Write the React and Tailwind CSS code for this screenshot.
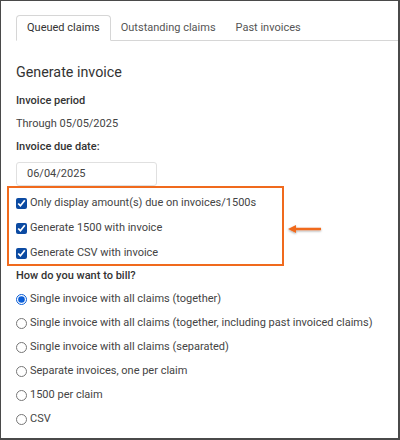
import React from "react";

const radios = [
  "Single invoice with all claims (together)",
  "Single invoice with all claims (together, including past invoiced claims)",
  "Single invoice with all claims (separated)",
  "Separate invoices, one per claim",
  "1500 per claim",
  "CSV",
];

const checks = [
  "Only display amount(s) due on invoices/1500s",
  "Generate 1500 with invoice",
  "Generate CSV with invoice",
];

export default function App() {
  return (
    <div
      className="relative w-[400px] h-[440px] overflow-hidden bg-white border-l border-t border-r-2 border-b-2 border-[#4a4a4a] text-[#333] text-[11px] leading-[16px]"
      style={{ fontFamily: "Roboto, 'Liberation Sans', sans-serif" }}
    >
      <div className="ml-[15px] mt-[14px] flex border-b border-[#d6d6d6] h-[26px]">
        <div className="h-[26px] px-[10px] flex items-center border border-[#d6d6d6] border-b-white rounded-t-[4px] bg-white -mb-px text-[#333]">
          Queued claims
        </div>
        <div className="h-[26px] px-[10px] flex items-center text-[#555]">Outstanding claims</div>
        <div className="h-[26px] px-[10px] flex items-center text-[#555]">Past invoices</div>
      </div>

      <div className="pl-[15px]">
        <div className="mt-[22px] text-[14.3px] leading-[18px] text-[#333]">Generate invoice</div>
        <div className="mt-[12px] font-medium">Invoice period</div>
        <div className="mt-[7px] text-[#444]">Through 05/05/2025</div>
        <div className="mt-[7px] font-medium">Invoice due date:</div>
        <div className="mt-[7px] w-[141px] h-[24px] border border-[#e0e0e0] rounded-[3px] flex items-center pl-[10px] text-[#444]">
          06/04/2025
        </div>
      </div>

      <div className="ml-[6px] w-[277px] h-[80px] border-2 border-[#f06a1d] pt-[7px] pl-[7px] flex flex-col gap-[9px]">
        {checks.map((c) => (
          <label key={c} className="flex items-center h-[16px] gap-[3px] text-[#444] whitespace-nowrap">
            <input type="checkbox" defaultChecked className="w-[11px] h-[11px] m-0 accent-[#0b4aa2]" />
            <span>{c}</span>
          </label>
        ))}
      </div>

      <div className="pl-[15px]">
        <div className="mt-[2px] font-medium">How do you want to bill?</div>
        <div className="mt-[7px] flex flex-col gap-[8px]">
          {radios.map((r, i) => (
            <label key={r} className="flex items-center h-[16px] gap-[3px] text-[#444] whitespace-nowrap">
              <input
                type="radio"
                name="bill"
                defaultChecked={i === 0}
                className="w-[11px] h-[11px] m-0 accent-[#0b5ed7]"
              />
              <span>{r}</span>
            </label>
          ))}
        </div>
      </div>

      <svg
        className="absolute left-[284px] top-[221px]"
        width="40"
        height="16"
        viewBox="0 0 40 16"
      >
        <defs>
          <filter id="sh" x="-20%" y="-50%" width="140%" height="200%">
            <feDropShadow dx="0" dy="1" stdDeviation="1" floodColor="#000" floodOpacity="0.35" />
          </filter>
        </defs>
        <g filter="url(#sh)">
          <line x1="10" y1="7" x2="36" y2="7" stroke="#f06a1d" strokeWidth="2.5" />
          <polygon points="3,7 11,3 11,11" fill="#f06a1d" />
        </g>
      </svg>
    </div>
  );
}
